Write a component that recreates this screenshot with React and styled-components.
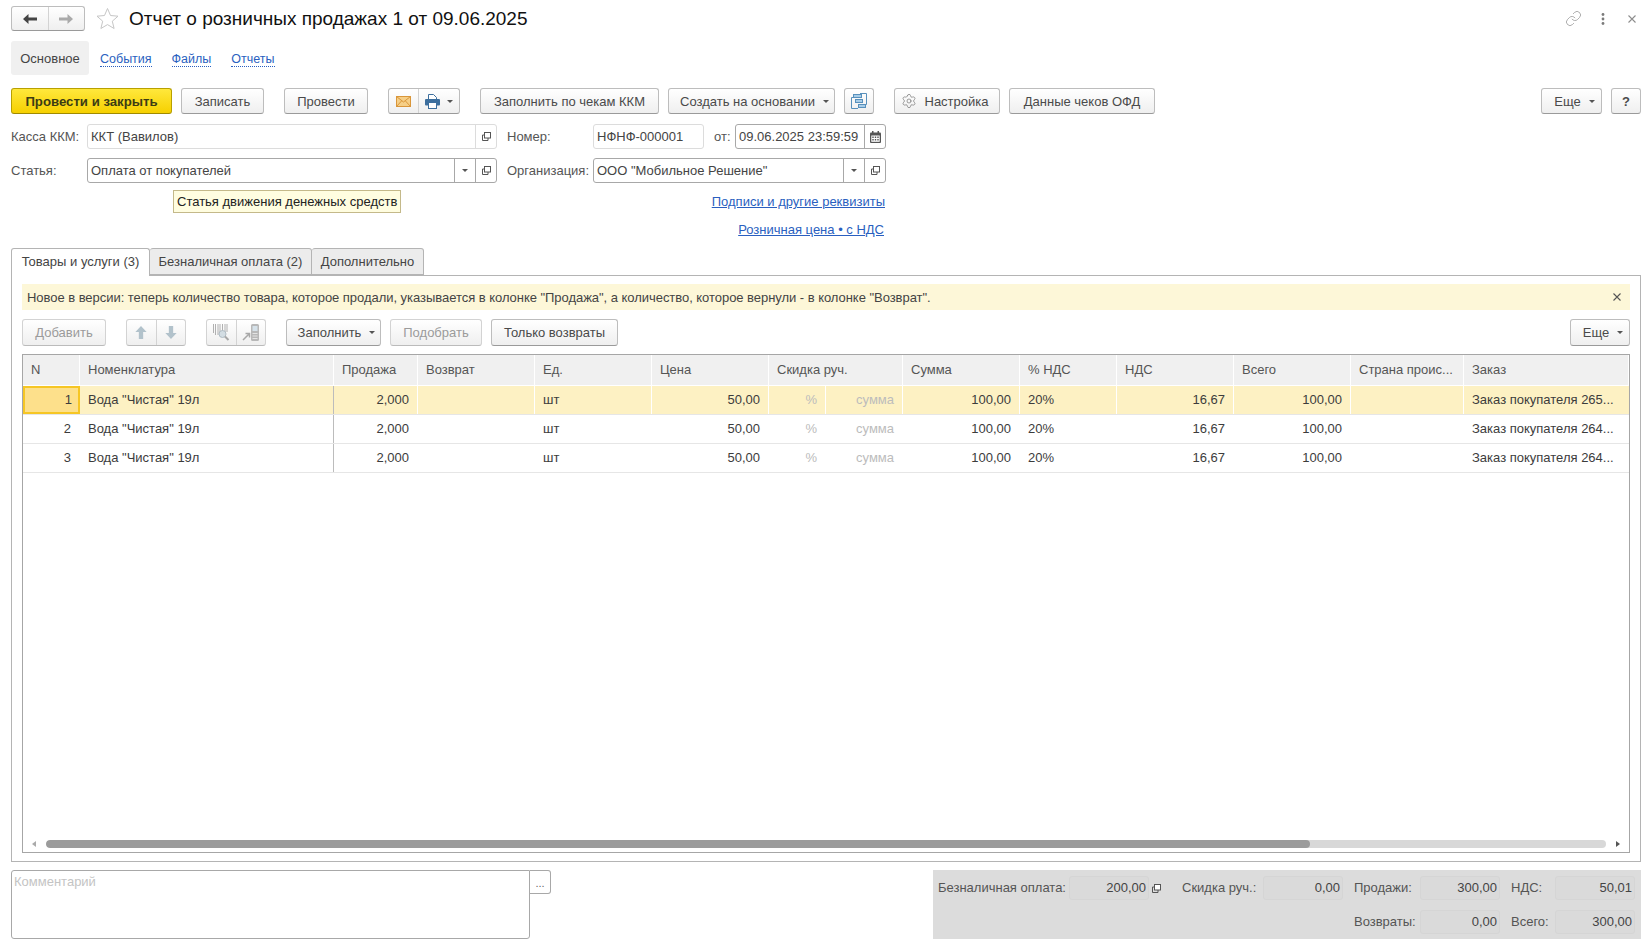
import React from "react";
import styled, { createGlobalStyle } from "styled-components";
import { Link as LinkIcon, Settings } from "lucide-react";

const GlobalStyle = createGlobalStyle`
  html, body { margin: 0; padding: 0; background: #fff; overflow: hidden; }
  body { font-family: "Liberation Sans", Arial, sans-serif; font-size: 13px; color: #4a4a4a; }
  * { box-sizing: border-box; }
`;

const Page = styled.div`
  width: 1644px; height: 944px; padding: 6px 3px 0 11px;
  display: flex; flex-direction: column; overflow: hidden; position: relative;
`;
const Header = styled.header`
  display: flex; align-items: center; height: 25px; flex: none;
`;
const ButtonGroup = styled.div`
  display: flex; height: ${p => p.$h || 26}px; width: ${p => p.$w}px; flex: none; margin-left: ${p => p.$ml || 0}px;
  border: 1px solid ${p => p.$disabled ? "#d3d3d3" : "#bdbdbd"}; border-bottom-color: ${p => p.$disabled ? "#bbb" : "#9a9a9a"};
  border-radius: 3px; background: linear-gradient(#fff, #efefef); overflow: hidden;
`;
const GroupCell = styled.div`
  flex: ${p => p.$grow || 1} 1 0; display: flex; align-items: center; justify-content: center; gap: 7px;
  & + & { border-left: 1px solid ${p => p.$disabled ? "#d3d3d3" : "#c4c4c4"}; }
`;
const StarWrap = styled.div`
  margin-left: 11px; width: 23px; height: 23px; flex: none; display: flex;
`;
const Title = styled.h1`
  margin: 0 0 0 10px; font-weight: 400; font-size: 19px; color: #111; white-space: nowrap;
`;
const HeaderIcons = styled.div`
  margin-left: auto; display: flex; align-items: center; color: #8d8d8d;
`;
const IconSlot = styled.div`
  width: ${p => p.$w}px; display: flex; justify-content: center; align-items: center;
`;
const Sections = styled.nav`
  display: flex; align-items: center; height: 34px; margin-top: 10px; flex: none; font-size: 12.5px;
`;
const Section = styled.span`
  ${p => p.$active ? `
    background: #f0f0f0; color: #444; border-radius: 3px; width: 78px; height: 34px; font-size: 13px;
    display: flex; align-items: center; justify-content: center; margin-right: 11px;
  ` : `
    color: #2a5fc0; border-bottom: 1px dotted #2a5fc0; line-height: 14px; margin-right: 20px; margin-top: 2px;
  `}
`;
const CommandBar = styled.div`
  display: flex; align-items: center; height: 26px; margin-top: 13px; flex: none;
`;
const Button = styled.button`
  font: inherit; height: ${p => p.$h || 26}px; width: ${p => p.$w}px; margin-left: ${p => p.$ml || 0}px; flex: none;
  padding: 0 ${p => p.$pr || 0}px 0 ${p => p.$pl || 0}px;
  color: ${p => p.$disabled ? "#9b9b9b" : "#4a4a4a"};
  border: 1px solid ${p => p.$disabled ? "#d3d3d3" : "#bdbdbd"}; border-bottom-color: ${p => p.$disabled ? "#bbb" : "#9a9a9a"};
  border-radius: 3px; background: linear-gradient(#fff, #efefef);
  display: flex; align-items: center; justify-content: center; gap: ${p => p.$gap || 7}px; white-space: nowrap;
`;
const PrimaryButton = styled(Button)`
  background: linear-gradient(#ffe83c, #f6d000); border-color: #b8a000; border-bottom-color: #a08a00;
  color: #3c3c14; font-weight: 700; font-size: 13.2px;
`;
const PushRight = styled.div` margin-left: auto; `;
const Caret = styled.i`
  display: inline-block; width: 0; height: 0; border-left: 3px solid transparent; border-right: 3px solid transparent;
  border-top: 3px solid #555;
`;
const FormRow = styled.div`
  display: flex; align-items: center; height: 25px; margin-top: ${p => p.$mt}px; flex: none; position: relative;
`;
const Label = styled.span`
  width: ${p => p.$w}px; margin-left: ${p => p.$ml || 0}px; flex: none; white-space: nowrap; color: #555;
`;
const Field = styled.div`
  display: flex; height: 25px; width: ${p => p.$w}px; flex: none; background: #fff; border-radius: 3px;
  border: 1px solid ${p => p.$soft ? "#dcdcdc" : "#a8a8a8"};
`;
const FieldText = styled.div`
  flex: 1; padding-left: 3px; line-height: 23px; color: #444; white-space: nowrap; overflow: hidden;
`;
const FieldBtn = styled.div`
  width: 21px; flex: none; display: flex; align-items: center; justify-content: center;
  border-left: 1px solid ${p => p.$soft ? "#dcdcdc" : "#a8a8a8"};
`;
const Tooltip = styled.div`
  position: absolute; left: 162px; top: 32px; width: 228px; height: 23px; padding-left: 3px; line-height: 21px;
  background: #fffde0; border: 1px solid #c4b98a; color: #222; white-space: nowrap;
`;
const LinksBox = styled.div`
  width: 874px; flex: none; display: flex; flex-direction: column; align-items: flex-end; padding-top: 11px; height: 65px; gap: 13px;
`;
const TextLink = styled.a`
  color: #2a5fc0; text-decoration: underline; line-height: 15px; margin-right: ${p => p.$mr || 0}px;
`;
const Tabs = styled.div`
  display: flex; height: 28px; flex: none; position: relative; z-index: 1;
`;
const Tab = styled.div`
  height: ${p => p.$active ? 28 : 27}px; width: ${p => p.$w}px; flex: none; display: flex; align-items: center; justify-content: center;
  padding-bottom: ${p => p.$active ? 3 : 1}px;
  border: 1px solid #b4b4b4; border-left-width: ${p => p.$first ? 1 : 0}px; border-bottom: ${p => p.$active ? "0" : "1px solid #b4b4b4"};
  border-radius: 3px 3px 0 0; background: ${p => p.$active ? "#fff" : "#ececec"}; color: #444; white-space: nowrap;
`;
const Panel = styled.section`
  height: 587px; flex: none; margin-top: -1px; border: 1px solid #b4b4b4; padding: 8px 10px 8px 10px;
  display: flex; flex-direction: column;
`;
const Notice = styled.div`
  height: 26px; flex: none; background: #fdf7d8; display: flex; align-items: center; justify-content: space-between;
  padding: 0 9px 0 5px; color: #444; white-space: nowrap; letter-spacing: -0.04px;
`;
const Toolbar = styled.div`
  height: 27px; margin-top: 9px; flex: none; display: flex; align-items: center;
`;
const Table = styled.div`
  margin-top: 8px; flex: 1; min-height: 0; border: 1px solid #a6a6a6; display: flex; flex-direction: column;
`;
const TEMPLATE = "57px 254px 84px 117px 117px 117px 57px 77px 117px 97px 117px 117px 113px 1fr";
const HeadRow = styled.div`
  display: grid; grid-template-columns: ${TEMPLATE}; height: 31px; flex: none; background: #fff;
`;
const HeadCell = styled.div`
  grid-column: span ${p => p.$span || 1}; background: #f0f0f0; margin-right: 1px; margin-bottom: 1px; padding-left: ${p => p.$pl || 8}px;
  line-height: 29px; color: #555; white-space: nowrap; overflow: hidden;
`;
const Row = styled.div`
  display: grid; grid-template-columns: ${TEMPLATE}; height: 29px; flex: none;
  background: ${p => p.$selected ? "#fdf1c3" : "#fff"}; border-bottom: 1px solid #e6e6e6;
`;
const Cell = styled.div`
  line-height: 28px; white-space: nowrap; overflow: hidden; color: ${p => p.$muted ? "#bcbcbc" : "#3c3c3c"};
  text-align: ${p => p.$right ? "right" : "left"};
  padding: ${p => p.$right ? "0 8px 0 0" : "0 0 0 8px"};
  border-right: 1px solid ${p => p.$fixed ? "#bcbcbc" : p.$selected ? "#fff" : "transparent"};
`;
const NumberCell = styled(Cell)`
  ${p => p.$selected && `background: #fde08b; border: 2px solid #f6c624; line-height: 24px; padding-right: 6px;`}
`;
const TableSpacer = styled.div` flex: 1; `;
const ScrollRow = styled.div`
  display: flex; align-items: center; height: 8px; margin-bottom: 4px; padding: 0 9px; flex: none; gap: 8px;
`;
const ScrollArrow = styled.i`
  width: 0; height: 0; border-top: 3px solid transparent; border-bottom: 3px solid transparent; flex: none;
  ${p => p.$left ? "border-right: 4px solid #aaa;" : "border-left: 4px solid #555;"}
  margin: ${p => p.$left ? "0 2px 0 0" : "0 0 0 2px"};
`;
const ScrollTrack = styled.div`
  flex: 1; height: 8px; background: #d8d8d8; border-radius: 4px; overflow: hidden;
`;
const ScrollThumb = styled.div`
  height: 100%; background: #9b9b9b; border-radius: 4px;
`;
const Bottom = styled.div`
  display: flex; margin-top: 8px; height: 69px; flex: none;
`;
const Comment = styled.div`
  width: 519px; height: 69px; border: 1px solid #a8a8a8; border-radius: 3px 0 3px 3px; padding: 3px 2px; color: #c4c4c4;
`;
const CommentButton = styled.div`
  width: 21px; height: 24px; border: 1px solid #a8a8a8; border-left: 0; border-radius: 0 3px 3px 0; text-align: center; line-height: 24px; font-size: 11px; color: #666;
`;
const Summary = styled.div`
  margin-left: auto; width: 708px; height: 69px; background: #dcdcdc; padding: 6px 0 0 5px;
  display: grid; grid-template-columns: 131px 80px 33px 81px 80px 11px 66px 80px 11px 44px 80px; grid-template-rows: 24px 24px; row-gap: 10px; align-items: center;
`;
const SumLabel = styled.span`
  grid-column: ${p => p.$col}; grid-row: ${p => p.$row || 1}; color: #555; white-space: nowrap; padding-bottom: 2px;
`;
const SumValue = styled.div`
  grid-column: ${p => p.$col}; grid-row: ${p => p.$row || 1}; height: 24px; line-height: 21px; text-align: right; padding-right: 2px;
  background: #dadada; border: 1px solid #d5d5d5; border-radius: 3px; color: #444;
`;
const SumIcon = styled.div`
  grid-column: ${p => p.$col}; grid-row: 1; padding-left: 3px; display: flex;
`;

const Star = () => (
  <svg width="23" height="23" viewBox="0 0 23 23" fill="#fff" stroke="#c6c6c6" strokeWidth="1">
    <path d="M11.5 1.5l3 7 7.5.7-5.7 5 1.8 7.3-6.6-3.9-6.6 3.9 1.8-7.3-5.7-5 7.5-.7z" />
  </svg>
);
const Arrow = ({ dir, color }) => (
  <svg width="14" height="10" viewBox="0 0 14 10" fill={color}>
    {dir === "left"
      ? <path d="M0 5l5.5-5v3.6H14v2.8H5.5V10z" />
      : <path d="M14 5L8.5 0v3.6H0v2.8h8.5V10z" />}
  </svg>
);
const VArrow = ({ up }) => (
  <svg width="12" height="13" viewBox="0 0 13 15" fill="#b2c2cb">
    {up ? <path d="M6.5 0l6.5 7H9v8H4V7H0z" /> : <path d="M6.5 15L13 8H9V0H4v8H0z" />}
  </svg>
);
const OpenIcon = () => (
  <svg width="9" height="9" viewBox="0 0 9 9" fill="none" stroke="#555" strokeWidth="1">
    <rect x="2.5" y=".5" width="6" height="5.5" fill="#fff" />
    <path d="M2.5 3H.5v5.5h5.5V6" />
  </svg>
);
const Calendar = () => (
  <svg width="11" height="12" viewBox="0 0 11 12">
    <rect x="0" y="1.5" width="11" height="10.5" rx="1" fill="#555" />
    <rect x="2" y="0" width="1.5" height="3" fill="#555" /><rect x="7.5" y="0" width="1.5" height="3" fill="#555" />
    <rect x="1.3" y="4.5" width="8.4" height="6.3" fill="#fff" />
    <path d="M2.3 5.5h1.4v1.4H2.3zM4.8 5.5h1.4v1.4H4.8zM7.3 5.5h1.4v1.4H7.3zM2.3 8h1.4v1.4H2.3zM4.8 8h1.4v1.4H4.8zM7.3 8h1.4v1.4H7.3z" fill="#555" />
  </svg>
);
const Mail = () => (
  <svg width="15" height="11" viewBox="0 0 15 11">
    <rect x=".5" y=".5" width="14" height="10" fill="#f6cf87" stroke="#d9963a" />
    <path d="M.5.5l7 5.5 7-5.5M.5 10.5l5-5.5M14.5 10.5l-5-5.5" fill="none" stroke="#d9963a" />
  </svg>
);
const Printer = () => (
  <svg width="15" height="15" viewBox="0 0 15 15">
    <path d="M3.5 5.5V.5h5l3 3v2" fill="#fff" stroke="#3d6f9e" />
    <rect x="0" y="5" width="15" height="6.5" rx="1" fill="#3d6f9e" />
    <rect x="3.5" y="8.5" width="8" height="6" fill="#fff" stroke="#3d6f9e" />
  </svg>
);
const Structure = () => (
  <svg width="16" height="16" viewBox="0 0 16 16" fill="none" stroke="#5890bc">
    <path d="M3 4.5H.5v11H7M13 11.5h2.5V.5H9" />
    <rect x="2.5" y="1.5" width="8" height="3" fill="#a8cde8" />
    <rect x="4.5" y="6.5" width="7" height="3" fill="#a8cde8" />
    <rect x="7.5" y="11.5" width="7" height="3" fill="#a8cde8" />
  </svg>
);
const Barcode = () => (
  <svg width="18" height="17" viewBox="0 0 18 17" fill="none">
    <path d="M1.5 0v9M3.5 0v11M6 0v11M8 0v11M10.5 0v9M13 0v8M15 0v8" stroke="#b0b0b0" />
    <circle cx="10.5" cy="10" r="3.5" fill="#d3dde3" stroke="#b0bcc4" />
    <path d="M13 12.5l3.5 3.5" stroke="#a8a8a8" strokeWidth="2" />
  </svg>
);
const Terminal = () => (
  <svg width="18" height="18" viewBox="0 0 18 18">
    <rect x="9" y="0" width="8" height="17" rx="1.5" fill="#b8b8b8" />
    <rect x="10.5" y="2" width="5" height="5" fill="#d6e2ea" />
    <path d="M10.5 9h5v1h-5zM10.5 11.5h5v1h-5zM10.5 14h5v1h-5z" fill="#e4e4e4" />
    <path d="M1 16l6-6M3.5 9.5H7.5v4" stroke="#a8a8a8" strokeWidth="1.5" fill="none" />
  </svg>
);
const Dots = () => (
  <svg width="4" height="12" viewBox="0 0 4 12" fill="#7b7b7b">
    <circle cx="2" cy="1.5" r="1.4" /><circle cx="2" cy="6" r="1.4" /><circle cx="2" cy="10.5" r="1.4" />
  </svg>
);
const Cross = ({ c = "#777" }) => (
  <svg width="8" height="8" viewBox="0 0 8 8" stroke={c} strokeWidth="1.1"><path d="M.5.5l7 7M7.5.5l-7 7" /></svg>
);

const ROWS = [
  { n: 1, order: "Заказ покупателя 265..." },
  { n: 2, order: "Заказ покупателя 264..." },
  { n: 3, order: "Заказ покупателя 264..." },
];

export default function App() {
  return (
    <Page>
      <GlobalStyle />
      <Header>
        <ButtonGroup $w={74} $h={25}>
          <GroupCell $grow={37}><Arrow dir="left" color="#444" /></GroupCell>
          <GroupCell $grow={37}><Arrow dir="right" color="#aaa" /></GroupCell>
        </ButtonGroup>
        <StarWrap><Star /></StarWrap>
        <Title>Отчет о розничных продажах 1 от 09.06.2025</Title>
        <HeaderIcons>
          <IconSlot $w={20}><LinkIcon size={17} strokeWidth={1} color="#8d8d8d" /></IconSlot>
          <IconSlot $w={40}><Dots /></IconSlot>
          <IconSlot $w={18}><Cross c="#8d8d8d" /></IconSlot>
        </HeaderIcons>
      </Header>
      <Sections>
        <Section $active>Основное</Section>
        <Section>События</Section>
        <Section>Файлы</Section>
        <Section>Отчеты</Section>
      </Sections>
      <CommandBar>
        <PrimaryButton $w={161}>Провести и закрыть</PrimaryButton>
        <Button $w={83} $ml={9}>Записать</Button>
        <Button $w={84} $ml={20}>Провести</Button>
        <ButtonGroup $w={72} $ml={20}>
          <GroupCell $grow={30}><Mail /></GroupCell>
          <GroupCell $grow={42}><Printer /><Caret /></GroupCell>
        </ButtonGroup>
        <Button $w={179} $ml={20}>Заполнить по чекам ККМ</Button>
        <Button $w={167} $ml={9} $pl={6} $gap={8}>Создать на основании <Caret /></Button>
        <Button $w={30} $ml={9}><Structure /></Button>
        <Button $w={106} $ml={20} $pr={5} $gap={8}><Settings size={16} strokeWidth={1} color="#707070" />Настройка</Button>
        <Button $w={146} $ml={9}>Данные чеков ОФД</Button>
        <PushRight />
        <Button $w={61} $pl={6} $gap={8}>Еще <Caret /></Button>
        <Button $w={30} $ml={9}><b>?</b></Button>
      </CommandBar>
      <FormRow $mt={10}>
        <Label $w={76}>Касса ККМ:</Label>
        <Field $w={410} $soft>
          <FieldText>ККТ (Вавилов)</FieldText>
          <FieldBtn $soft><OpenIcon /></FieldBtn>
        </Field>
        <Label $w={86} $ml={10}>Номер:</Label>
        <Field $w={111} $soft><FieldText>НФНФ-000001</FieldText></Field>
        <Label $w={21} $ml={10}>от:</Label>
        <Field $w={151}>
          <FieldText>09.06.2025 23:59:59</FieldText>
          <FieldBtn><Calendar /></FieldBtn>
        </Field>
      </FormRow>
      <FormRow $mt={9}>
        <Label $w={76}>Статья:</Label>
        <Field $w={410}>
          <FieldText>Оплата от покупателей</FieldText>
          <FieldBtn><Caret /></FieldBtn>
          <FieldBtn><OpenIcon /></FieldBtn>
        </Field>
        <Label $w={86} $ml={10}>Организация:</Label>
        <Field $w={293}>
          <FieldText>ООО "Мобильное Решение"</FieldText>
          <FieldBtn><Caret /></FieldBtn>
          <FieldBtn><OpenIcon /></FieldBtn>
        </Field>
        <Tooltip>Статья движения денежных средств</Tooltip>
      </FormRow>
      <LinksBox>
        <TextLink>Подписи и другие реквизиты</TextLink>
        <TextLink $mr={1}>Розничная цена • с НДС</TextLink>
      </LinksBox>
      <Tabs>
        <Tab $active $first $w={139}>Товары и услуги (3)</Tab>
        <Tab $w={162}>Безналичная оплата (2)</Tab>
        <Tab $w={112}>Дополнительно</Tab>
      </Tabs>
      <Panel>
        <Notice>
          <span>Новое в версии: теперь количество товара, которое продали, указывается в колонке "Продажа", а количество, которое вернули - в колонке "Возврат".</span>
          <Cross c="#555" />
        </Notice>
        <Toolbar>
          <Button $w={84} $h={27} $disabled>Добавить</Button>
          <ButtonGroup $w={60} $h={27} $ml={20} $disabled>
            <GroupCell $disabled><VArrow up /></GroupCell>
            <GroupCell $disabled><VArrow /></GroupCell>
          </ButtonGroup>
          <ButtonGroup $w={60} $h={27} $ml={20} $disabled>
            <GroupCell $disabled><Barcode /></GroupCell>
            <GroupCell $disabled><Terminal /></GroupCell>
          </ButtonGroup>
          <Button $w={95} $h={27} $ml={20} $pl={6} $gap={8}>Заполнить <Caret /></Button>
          <Button $w={92} $h={27} $ml={9} $disabled>Подобрать</Button>
          <Button $w={127} $h={27} $ml={9}>Только возвраты</Button>
          <PushRight />
          <Button $w={60} $h={27} $pl={6} $gap={8}>Еще <Caret /></Button>
        </Toolbar>
        <Table>
          <HeadRow>
            <HeadCell>N</HeadCell>
            <HeadCell>Номенклатура</HeadCell>
            <HeadCell>Продажа</HeadCell>
            <HeadCell>Возврат</HeadCell>
            <HeadCell>Ед.</HeadCell>
            <HeadCell>Цена</HeadCell>
            <HeadCell $span={2}>Скидка руч.</HeadCell>
            <HeadCell>Сумма</HeadCell>
            <HeadCell>% НДС</HeadCell>
            <HeadCell>НДС</HeadCell>
            <HeadCell>Всего</HeadCell>
            <HeadCell>Страна проис...</HeadCell>
            <HeadCell>Заказ</HeadCell>
          </HeadRow>
          {ROWS.map((r, i) => {
            const s = i === 0;
            return (
              <Row key={r.n} $selected={s}>
                <NumberCell $right $selected={s}>{r.n}</NumberCell>
                <Cell $fixed>Вода "Чистая" 19л</Cell>
                <Cell $right $selected={s}>2,000</Cell>
                <Cell $selected={s}></Cell>
                <Cell $selected={s}>шт</Cell>
                <Cell $right $selected={s}>50,00</Cell>
                <Cell $right $muted $selected={s}>%</Cell>
                <Cell $right $muted $selected={s}>сумма</Cell>
                <Cell $right $selected={s}>100,00</Cell>
                <Cell $selected={s}>20%</Cell>
                <Cell $right $selected={s}>16,67</Cell>
                <Cell $right $selected={s}>100,00</Cell>
                <Cell $selected={s}></Cell>
                <Cell>{r.order}</Cell>
              </Row>
            );
          })}
          <TableSpacer />
          <ScrollRow>
            <ScrollArrow $left />
            <ScrollTrack><ScrollThumb style={{ width: "81%" }} /></ScrollTrack>
            <ScrollArrow />
          </ScrollRow>
        </Table>
      </Panel>
      <Bottom>
        <Comment>Комментарий</Comment>
        <CommentButton>...</CommentButton>
        <Summary>
          <SumLabel $col={1}>Безналичная оплата:</SumLabel>
          <SumValue $col={2}>200,00</SumValue>
          <SumIcon $col={3}><OpenIcon /></SumIcon>
          <SumLabel $col={4}>Скидка руч.:</SumLabel>
          <SumValue $col={5}>0,00</SumValue>
          <SumLabel $col={7}>Продажи:</SumLabel>
          <SumValue $col={8}>300,00</SumValue>
          <SumLabel $col={10}>НДС:</SumLabel>
          <SumValue $col={11}>50,01</SumValue>
          <SumLabel $col={7} $row={2}>Возвраты:</SumLabel>
          <SumValue $col={8} $row={2}>0,00</SumValue>
          <SumLabel $col={10} $row={2}>Всего:</SumLabel>
          <SumValue $col={11} $row={2}>300,00</SumValue>
        </Summary>
      </Bottom>
    </Page>
  );
}
